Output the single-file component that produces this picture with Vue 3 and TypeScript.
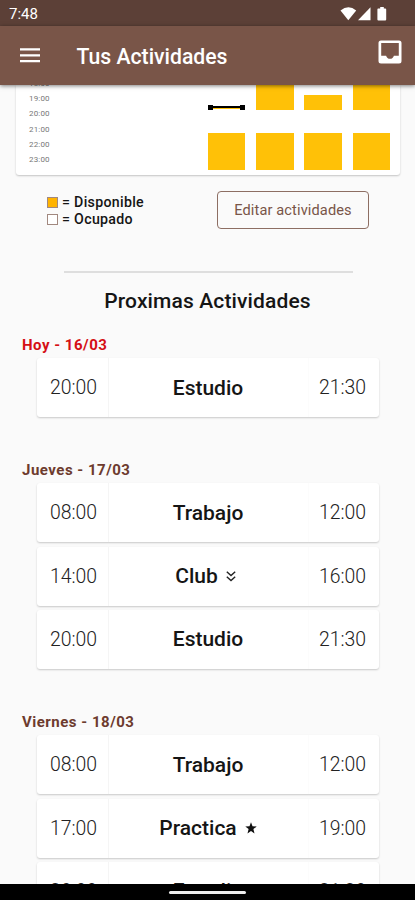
<script setup lang="ts">
interface Activity { start: string; name: string; end: string; mark?: 'low' | 'star' }
interface Day { label: string; today?: boolean; items: Activity[] }
interface Block { gap: number; height: number; kind: 'free' | 'now' }

const hours: string[] = ['18:00', '19:00', '20:00', '21:00', '22:00', '23:00']

const evening: Block = { gap: 23, height: 37.5, kind: 'free' }
const week: Block[][] = [
  [],
  [],
  [],
  [{ gap: 19.5, height: 5, kind: 'now' }, evening],
  [{ gap: 0, height: 24.5, kind: 'free' }, evening],
  [{ gap: 9.5, height: 15, kind: 'free' }, evening],
  [{ gap: 0, height: 24.5, kind: 'free' }, evening],
]

const days: Day[] = [
  { label: 'Hoy - 16/03', today: true, items: [{ start: '20:00', name: 'Estudio', end: '21:30' }] },
  {
    label: 'Jueves - 17/03',
    items: [
      { start: '08:00', name: 'Trabajo', end: '12:00' },
      { start: '14:00', name: 'Club', end: '16:00', mark: 'low' },
      { start: '20:00', name: 'Estudio', end: '21:30' },
    ],
  },
  {
    label: 'Viernes - 18/03',
    items: [
      { start: '08:00', name: 'Trabajo', end: '12:00' },
      { start: '17:00', name: 'Practica', end: '19:00', mark: 'star' },
      { start: '20:00', name: 'Estudio', end: '21:30' },
    ],
  },
]
</script>

<template>
  <div class="screen">
    <div class="status">
      <span class="clock">7:48</span>
      <svg class="signals" width="48" height="16" viewBox="0 0 48 16">
        <path d="M.5 4.6Q8.500-2 16.200 4.600L8.300 14.300Z" />
        <path d="M18 14.300H30.500V1.300Z" />
        <path d="M38.200 2.600H40.200V1H43.800V2.600H45.200Q46.200 2.600 46.200 3.600V13.400Q46.200 14.400 45.200 14.400H38.400Q37.400 14.400 37.400 13.400V3.600Q37.400 2.600 38.200 2.600Z" />
      </svg>
    </div>
    <header class="bar">
      <svg class="menu" width="20" height="15" viewBox="0 0 20 15">
        <path d="M0 1.400H20M0 7.300H20M0 13.200H20" />
      </svg>
      <h1>Tus Actividades</h1>
      <svg class="inbox" width="24" height="24" viewBox="0 0 24 24">
        <path fill-rule="evenodd" d="M3 .5H21Q23.500.5 23.500 3V21Q23.500 23.500 21 23.500H3Q.5 23.500.5 21V3Q.5.500 3 .5ZM3.200 3V15.700H8.100Q9 18.800 12 18.800T15.900 15.700H20.800V3Z" />
      </svg>
    </header>

    <main class="content">
      <section class="chart">
        <div class="hours"><span v-for="h in hours" :key="h">{{ h }}</span></div>
        <div class="week">
          <div v-for="(col, i) in week" :key="i" class="day-col">
            <div
              v-for="(b, j) in col"
              :key="j"
              :class="['block', b.kind]"
              :style="{ marginTop: b.gap + 'px', height: b.height + 'px' }"
            ></div>
          </div>
        </div>
      </section>

      <section class="controls">
        <div class="legend">
          <div><i class="swatch free-swatch"></i>= Disponible</div>
          <div><i class="swatch"></i>= Ocupado</div>
        </div>
        <button type="button" class="edit">Editar actividades</button>
      </section>

      <hr class="rule" />
      <h2>Proximas Actividades</h2>

      <section v-for="d in days" :key="d.label" class="day">
        <h3 :class="{ today: d.today }">{{ d.label }}</h3>
        <div class="list">
          <article v-for="a in d.items" :key="a.start" class="card">
            <span class="time">{{ a.start }}</span>
            <span :class="['name', { lowered: a.mark === 'low' }]">
              {{ a.name }}
              <svg v-if="a.mark === 'low'" class="low" width="10" height="11" viewBox="0 0 10 11">
                <path d="M.8.800 5 4.600 9.200.8M.8 5.800 5 9.600 9.200 5.800" />
              </svg>
              <svg v-if="a.mark === 'star'" class="star" width="12" height="12" viewBox="0 0 12 12">
                <path d="M6 .3 7.500 4.300 11.700 4.500 8.400 7.100 9.500 11.400 6 9 2.500 11.400 3.600 7.100.3 4.500 4.500 4.300Z" />
              </svg>
            </span>
            <span class="time end">{{ a.end }}</span>
          </article>
        </div>
      </section>
    </main>

    <footer class="nav"><div class="pill"></div></footer>
  </div>
</template>

<style>
body { margin: 0; background: #fafafa; }
</style>

<style scoped>
* { box-sizing: border-box; }
.screen {
  display: flex;
  flex-direction: column;
  width: 415px;
  height: 900px;
  overflow: hidden;
  background: #fafafa;
  color: #151515;
  font-family: Roboto, "Liberation Sans", sans-serif;
}
.status {
  flex: 0 0 26px;
  display: flex;
  align-items: center;
  justify-content: space-between;
  padding: 2px 23px 0 9px;
  background: #5c4037;
  color: #fff;
}
.clock { font-size: 15px; }
.signals { margin-top: -1px; margin-right: 4px; fill: #fff; }
.bar {
  position: relative;
  z-index: 1;
  flex: 0 0 59px;
  display: flex;
  align-items: center;
  padding: 0 13px 0 20px;
  background: #795548;
  color: #fff;
  box-shadow: 0 1px 4px rgba(0, 0, 0, .5);
}
.menu { fill: none; stroke: #fff; stroke-width: 2.2; }
h1 { flex: 1; margin: 2px 0 0 36.500px; font-size: 21.200px; line-height: 28px; font-weight: 500; }
.inbox { margin-top: -8px; fill: #fff; }
.content { flex: 1; min-height: 0; overflow: hidden; }
.chart {
  display: flex;
  height: 90px;
  margin: 0 15px 0 16px;
  padding-right: 10px;
  background: #fff;
  border-radius: 0 0 3px 3px;
  box-shadow: 0 1px 2px rgba(0, 0, 0, .22);
}
.hours {
  display: flex;
  flex-direction: column;
  width: 47px;
  margin-top: -9px;
  padding-left: 13px;
  color: #777;
  font-size: 8px;
  letter-spacing: .15px;
}
.hours span { flex: 0 0 15.2px; line-height: 15.2px; }
.week { flex: 1; display: grid; grid-template-columns: repeat(7, 37.500px); justify-content: space-between; }
.day-col { display: flex; flex-direction: column; }
.free { background: #ffc107; }
.now {
  background:
    linear-gradient(#000, #000) left / 5px 5px no-repeat,
    linear-gradient(#000, #000) right / 5px 5px no-repeat,
    linear-gradient(transparent 1px, #000 1px, #000 3px, #ffc107 3px, #ffc107 4px, transparent 4px);
}
.controls { display: flex; justify-content: space-between; padding: 16px 46px 0 47px; }
.legend { padding-top: 3px; font-size: 14.2px; font-weight: 500; line-height: 17px; letter-spacing: .3px; }
.legend div { display: flex; align-items: center; gap: 4px; }
.swatch { width: 11px; height: 11px; border: 1px solid #a1887f; background: #fff; }
.free-swatch { background: #ffb300; }
.edit {
  width: 152px;
  height: 38px;
  padding: 0 0 1px;
  border: 1px solid #8d6e63;
  border-radius: 4px;
  background: transparent;
  color: #795548;
  font: 400 14.600px Roboto, sans-serif;
  letter-spacing: .12px;
}
.rule { width: 289px; height: 2px; margin: 42px auto 0 64px; border: 0; background: #dedede; }
h2 { margin: 14px 0 0; text-align: center; font-size: 21px; line-height: 28px; font-weight: 500; letter-spacing: .13px; }
.day { padding-bottom: 43.400px; }
h2 + .day { padding-top: 20px; }
h3 { margin: 0 0 0 22px; color: #6d3b2e; font-size: 15px; line-height: 20px; font-weight: 700; letter-spacing: .5px; }
h3.today { color: #d50f14; }
.list { display: flex; flex-direction: column; gap: 4.300px; margin: 3px 36px 0 37px; }
.card {
  display: grid;
  grid-template-columns: 72px 1fr 71px;
  height: 59px;
  align-items: stretch;
  background: #fff;
  border-radius: 3px;
  box-shadow: 0 1px 2px rgba(0, 0, 0, .2);
}
.card > span { display: flex; align-items: center; justify-content: center; }
.time { padding-left: 2px; border-right: 1px solid #f5f5f5; color: #222; font-size: 19.400px; font-weight: 300; }
.time.end { padding: 0 3px 0 0; border-right: 0; border-left: 1px solid #fcfcfc; }
.name { gap: 8px; padding-right: 1px; font-size: 21px; font-weight: 500; }
.name.lowered { padding-right: 6px; }
.low { fill: none; stroke: #222; stroke-width: 1.400; }
.star { fill: #111; }
.nav { position: relative; z-index: 1; flex: 0 0 16px; display: flex; align-items: center; justify-content: center; background: #000; }
.pill { width: 77px; height: 3px; margin-top: 1px; border-radius: 2px; background: #eee; }
</style>
